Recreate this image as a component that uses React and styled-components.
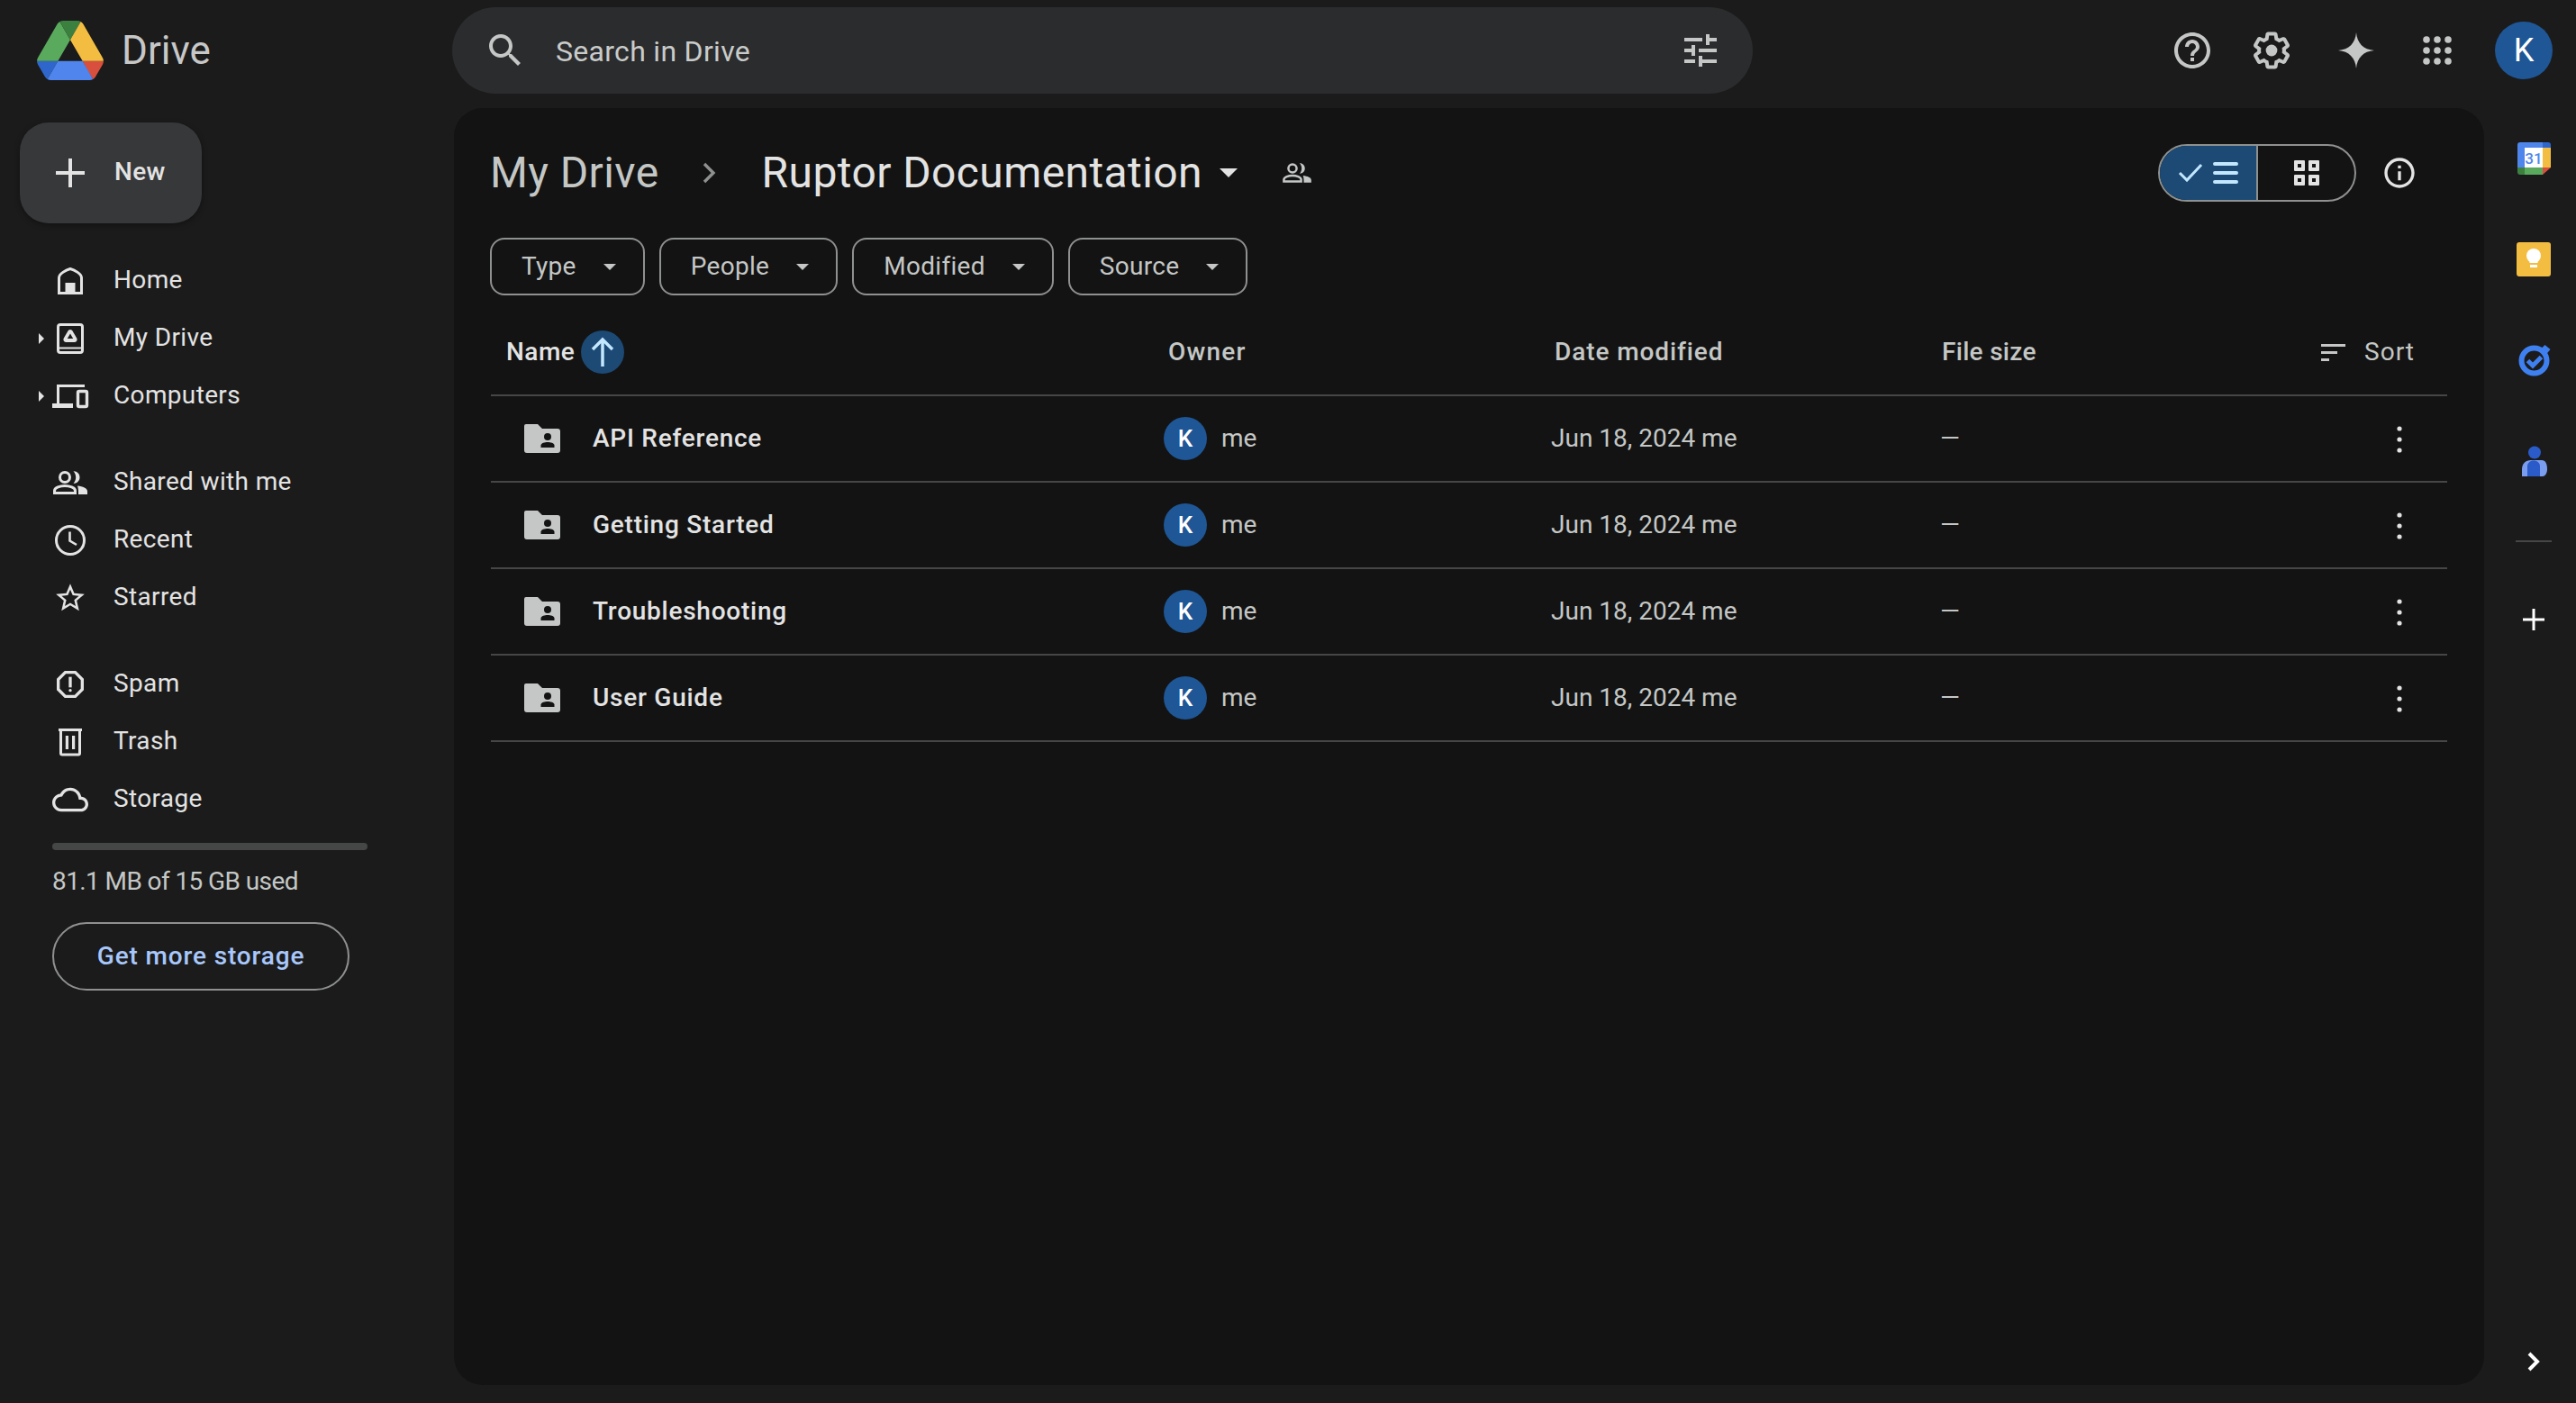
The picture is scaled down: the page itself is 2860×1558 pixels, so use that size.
import React from "react";
import styled, { createGlobalStyle } from "styled-components";

const Global = createGlobalStyle`
  html, body { margin: 0; padding: 0; background: #1b1b1b; }
  body { font-family: Roboto, "Noto Sans", "Liberation Sans", sans-serif; color: #e3e3e3; overflow: hidden; }
  * { box-sizing: border-box; }
`;

const Page = styled.div`
  width: 2860px;
  height: 1558px;
  display: grid;
  grid-template-columns: 504px 1fr 102px;
  grid-template-rows: 120px 1fr;
  background: #1b1b1b;
`;

/* ---------- header ---------- */
const Header = styled.header`
  grid-column: 1 / -1;
  display: flex;
  align-items: flex-start;
`;
const Brand = styled.div`
  width: 502px;
  height: 112px;
  display: flex;
  align-items: center;
  padding-left: 41px;
  gap: 20px;
`;
const BrandName = styled.span`
  font-size: 44px;
  color: #c7c7c7;
`;
const SearchBar = styled.div`
  width: 1444px;
  height: 96px;
  margin-top: 8px;
  border-radius: 48px;
  background: #2b2c2e;
  display: flex;
  align-items: center;
  padding: 0 34px 0 35px;
  color: #c4c7c5;
`;
const SearchLabel = styled.span`
  flex: 1;
  font-size: 32px;
  margin: 1px 0 0 32px;
  color: #c9cbc9;
  letter-spacing: 0.3px;
`;
const HeaderTools = styled.div`
  flex: 1;
  display: flex;
  align-items: center;
  justify-content: flex-end;
  gap: 40px;
  height: 64px;
  margin-top: 24px;
  padding-right: 26px;
  color: #c4c7c5;
`;
const SparkSlot = styled.span`
  display: flex;
  margin: 0 2px 0 6px;
`;
const Avatar = styled.div`
  width: ${(p) => p.$size}px;
  height: ${(p) => p.$size}px;
  flex: none;
  border-radius: 50%;
  background: #1f5695;
  color: #fff;
  display: flex;
  align-items: center;
  justify-content: center;
  font-size: ${(p) => p.$font}px;
  font-weight: ${(p) => p.$weight};
`;

/* ---------- sidebar ---------- */
const Sidebar = styled.aside`
  display: flex;
  flex-direction: column;
  padding-top: 16px;
`;
const NewButton = styled.div`
  width: 202px;
  height: 112px;
  margin-left: 22px;
  border-radius: 32px;
  background: #37383a;
  box-shadow: 0 2px 6px rgba(0, 0, 0, 0.35);
  display: flex;
  align-items: center;
  padding-left: 32px;
  gap: 25px;
  font-size: 28px;
  font-weight: 460;
  color: #e3e3e3;
`;
const NewLabel = styled.span`
  margin-top: -3px;
  letter-spacing: 0.3px;
`;
const NavGroup = styled.nav`
  margin-top: 32px;
  display: flex;
  flex-direction: column;
`;
const NavRow = styled.div`
  height: 64px;
  display: grid;
  grid-template-columns: 14px 48px 1fr;
  align-items: center;
  padding-left: 40px;
  font-size: 28px;
  color: #e3e3e3;
`;
const Expander = styled.span`
  width: 0;
  height: 0;
  margin-left: 3px;
  border-left: 6px solid #e3e3e3;
  border-top: 6px solid transparent;
  border-bottom: 6px solid transparent;
`;
const NavIconBox = styled.span`
  width: 48px;
  height: 48px;
  display: flex;
  align-items: center;
  justify-content: center;
`;
const NavLabel = styled.span`
  margin: -3px 0 0 24px;
  letter-spacing: 0.35px;
`;
const StorageBar = styled.div`
  width: 350px;
  height: 8px;
  margin: 16px 0 0 58px;
  border-radius: 4px;
  background: #444746;
`;
const StorageText = styled.div`
  margin: 17px 0 0 58px;
  font-size: 28px;
  line-height: 36px;
  color: #c4c7c5;
  letter-spacing: -0.6px;
`;
const StorageButton = styled.div`
  width: 330px;
  height: 76px;
  margin: 27px 0 0 58px;
  padding-bottom: 2px;
  border: 2px solid #8e918f;
  border-radius: 38px;
  display: flex;
  align-items: center;
  justify-content: center;
  font-size: 28px;
  font-weight: 460;
  letter-spacing: 0.85px;
  color: #a8c7fa;
`;

/* ---------- main ---------- */
const Main = styled.main`
  margin-bottom: 20px;
  border-radius: 32px;
  background: #131313;
  padding: 40px 41px 0 41px;
`;
const TitleRow = styled.div`
  height: 64px;
  margin-left: -1px;
  display: flex;
  align-items: center;
`;
const Crumb = styled.span`
  font-size: 48px;
  margin-top: -2px;
  color: #c4c7c5;
  letter-spacing: 0.4px;
`;
const CrumbSep = styled.span`
  display: flex;
  margin: 0 49px 0 47px;
`;
const CurrentCrumb = styled(Crumb)`
  color: #e3e3e3;
`;
const TitleCaret = styled.span`
  width: 0;
  height: 0;
  margin-left: 19px;
  border-top: 10px solid #e3e3e3;
  border-left: 10px solid transparent;
  border-right: 10px solid transparent;
`;
const SharedIcon = styled.span`
  display: flex;
  margin-left: 46px;
  color: #c4c7c5;
`;
const TitleTools = styled.div`
  margin-left: auto;
  display: flex;
  align-items: center;
  gap: 28px;
  padding-right: 33px;
`;
const ViewToggle = styled.div`
  width: 220px;
  height: 64px;
  display: flex;
  border: 2px solid #8e918f;
  border-radius: 32px;
  overflow: hidden;
`;
const ViewSegment = styled.div`
  flex: ${(p) => (p.$active ? "0 0 109px" : "1")};
  display: flex;
  align-items: center;
  justify-content: center;
  gap: 11px;
  background: ${(p) => (p.$active ? "#1c4a75" : "transparent")};
  color: ${(p) => (p.$active ? "#c2e7ff" : "#e3e3e3")};
  border-right: ${(p) => (p.$active ? "2px solid #8e918f" : "none")};
`;
const Filters = styled.div`
  margin: 40px 0 0 -1px;
  display: flex;
  gap: 16px;
`;
const Chip = styled.div`
  height: 64px;
  padding: 0 30px 0 33px;
  display: flex;
  align-items: center;
  gap: 30px;
  border: 2px solid #8e918f;
  border-radius: 16px;
  font-size: 28px;
  letter-spacing: 0.3px;
  color: #c4c7c5;
`;
const ChipLabel = styled.span`
  margin-top: -2px;
`;
const ChipCaret = styled.span`
  width: 0;
  height: 0;
  border-top: 7px solid #c4c7c5;
  border-left: 7px solid transparent;
  border-right: 7px solid transparent;
`;
const Table = styled.div`
  margin-top: 16px;
`;
const TableRow = styled.div`
  height: 96px;
  display: grid;
  grid-template-columns: 747px 430px 428px 1fr auto;
  align-items: center;
  border-bottom: 2px solid #444746;
  font-size: 28px;
  color: #c4c7c5;
`;
const CellText = styled.span`
  margin-top: -2px;
`;
const HeadCell = styled.div`
  display: flex;
  align-items: center;
  padding-left: ${(p) => p.$pad}px;
  font-weight: 460;
  letter-spacing: ${(p) => p.$track}px;
  color: ${(p) => (p.$strong ? "#e3e3e3" : "#c4c7c5")};
`;
const SortBadge = styled.span`
  width: 48px;
  height: 48px;
  margin-left: 7px;
  border-radius: 50%;
  background: #1c4a75;
  color: #c2e7ff;
  display: flex;
  align-items: center;
  justify-content: center;
`;
const SortControl = styled.div`
  display: flex;
  align-items: center;
  gap: 20px;
  padding-right: 36px;
  letter-spacing: 1px;
  color: #c4c7c5;
`;
const NameCell = styled.div`
  display: flex;
  align-items: center;
  gap: 36px;
  padding-left: 37px;
  color: #e3e3e3;
  font-weight: 460;
  letter-spacing: 0.75px;
`;
const OwnerCell = styled.div`
  display: flex;
  align-items: center;
  gap: 16px;
`;
const DateCell = styled.div`
  display: flex;
`;
const SizeCell = styled.div`
  display: flex;
  padding-left: 4px;
`;
const RowAction = styled.div`
  display: flex;
  padding-right: 29px;
  color: #e3e3e3;
`;

/* ---------- right rail ---------- */
const Rail = styled.aside`
  display: flex;
  flex-direction: column;
  align-items: center;
  padding: 32px 0 22px 8px;
  gap: 64px;
  color: #fff;
`;
const RailDivider = styled.div`
  width: 40px;
  height: 2px;
  margin-bottom: -2px;
  background: #444746;
`;
const RailPlus = styled.div`
  display: flex;
  color: #fff;
  padding: 6px;
`;
const RailBottom = styled.div`
  margin-top: auto;
  display: flex;
`;

/* ---------- icons ---------- */
const Mat = ({ size = 48, d, children, ...r }) => (
  <svg width={size} height={size} viewBox="0 0 24 24" fill="currentColor" {...r}>
    {d && <path d={d} />}
    {children}
  </svg>
);
const Box = ({ children, size = 48 }) => (
  <svg width={size} height={size} viewBox="0 0 48 48" fill="none">
    {children}
  </svg>
);

const DriveLogo = () => (
  <svg width="74" height="66" viewBox="0 0 87.3 78">
    <path d="m6.6 66.85 3.85 6.65c.8 1.4 1.95 2.5 3.3 3.3l13.75-23.8h-27.5c0 1.55.4 3.1 1.2 4.5z" fill="#2e66cc" />
    <path d="m43.65 25-13.75-23.8c-1.35.8-2.5 1.9-3.3 3.3l-25.4 44a9.06 9.06 0 0 0 -1.2 4.5h27.5z" fill="#5aaa5e" />
    <path d="m73.55 76.8c1.35-.8 2.5-1.9 3.3-3.3l1.6-2.75 7.65-13.25c.8-1.4 1.2-2.95 1.2-4.5h-27.502l5.852 11.5z" fill="#d94f3d" />
    <path d="m43.65 25 13.75-23.8c-1.35-.8-2.9-1.2-4.5-1.2h-18.5c-1.6 0-3.15.45-4.5 1.2z" fill="#3b803f" />
    <path d="m59.8 53h-32.3l-13.75 23.8c1.35.8 2.9 1.2 4.5 1.2h50.8c1.6 0 3.15-.45 4.5-1.2z" fill="#4f85ec" />
    <path d="m73.4 26.5-12.7-22c-.8-1.4-1.95-2.5-3.3-3.3l-13.75 23.8 16.15 28h27.45c0-1.55-.4-3.1-1.2-4.5z" fill="#f3bd41" />
  </svg>
);

const SearchIcon = () => (
  <Mat d="M15.5 14h-.79l-.28-.27C15.41 12.59 16 11.11 16 9.5 16 5.91 13.09 3 9.5 3S3 5.91 3 9.5 5.91 16 9.5 16c1.61 0 3.09-.59 4.23-1.57l.27.28v.79l5 4.99L20.49 19l-4.99-5zm-6 0C7.01 14 5 11.99 5 9.5S7.01 5 9.5 5 14 7.01 14 9.5 11.99 14 9.5 14z" />
);
const TuneIcon = () => (
  <Mat d="M3 17v2h6v-2H3zM3 5v2h10V5H3zm10 16v-2h8v-2h-8v-2h-2v6h2zM7 9v2H3v2h4v2h2V9H7zm14 4v-2H11v2h10zm-6-4h2V7h4V5h-4V3h-2v6z" />
);
const HelpIcon = () => (
  <Mat d="M11 18h2v-2h-2v2zm1-16C6.48 2 2 6.48 2 12s4.48 10 10 10 10-4.48 10-10S17.52 2 12 2zm0 18c-4.41 0-8-3.59-8-8s3.59-8 8-8 8 3.59 8 8-3.59 8-8 8zm0-14c-2.21 0-4 1.79-4 4h2c0-1.1.9-2 2-2s2 .9 2 2c0 2-3 1.75-3 5h2c0-2.25 3-2.5 3-5 0-2.21-1.79-4-4-4z" />
);
const GearIcon = () => (
  <Mat>
    <path d="M13.85 22.25h-3.7c-.74 0-1.36-.54-1.45-1.27l-.27-1.89c-.27-.14-.53-.29-.79-.46l-1.8.72c-.7.26-1.47-.03-1.81-.65L2.2 15.53c-.35-.66-.2-1.44.36-1.88l1.53-1.19c-.01-.15-.02-.3-.02-.46 0-.15.01-.31.02-.46l-1.52-1.19c-.59-.45-.74-1.26-.37-1.88l1.85-3.19c.34-.62 1.11-.9 1.79-.63l1.81.73c.26-.17.52-.32.78-.46l.27-1.91c.09-.7.71-1.25 1.44-1.25h3.7c.74 0 1.36.54 1.45 1.27l.27 1.89c.27.14.53.29.79.46l1.8-.72c.71-.26 1.48.03 1.82.65l1.84 3.18c.36.66.2 1.44-.36 1.88l-1.52 1.19c.01.15.02.3.02.46s-.01.31-.02.46l1.52 1.19c.56.45.72 1.23.37 1.86l-1.86 3.22c-.34.62-1.11.9-1.8.63l-1.8-.72c-.26.17-.52.32-.78.46l-.27 1.91c-.1.68-.72 1.22-1.45 1.22zm-3.23-2h2.76l.37-2.55.53-.22c.44-.18.88-.44 1.34-.78l.45-.34 2.38.96 1.38-2.4-2.03-1.58.07-.56c.03-.26.06-.51.06-.78s-.03-.53-.06-.78l-.07-.56 2.03-1.58-1.39-2.4-2.39.96-.45-.35c-.42-.32-.87-.58-1.33-.77l-.52-.22-.37-2.55h-2.76l-.37 2.55-.53.21c-.44.19-.88.44-1.34.79l-.45.33-2.38-.95-1.39 2.39 2.03 1.58-.07.56a7 7 0 0 0-.06.79c0 .26.02.53.06.78l.07.56-2.03 1.58 1.38 2.4 2.39-.96.45.35c.43.33.86.58 1.33.77l.53.22.38 2.55z" />
    <circle cx="12" cy="12" r="3.2" />
  </Mat>
);
const SparkIcon = () => (
  <Box>
    <path d="M24 4C25 16 32 23 44 24C32 25 25 32 24 44C23 32 16 25 4 24C16 23 23 16 24 4Z" fill="#c4c7c5" />
  </Box>
);
const AppsIcon = () => (
  <Box>
    {[12, 24, 36].flatMap((y) =>
      [12, 24, 36].map((x) => <circle key={`${x}-${y}`} cx={x} cy={y} r="3.8" fill="#c4c7c5" />)
    )}
  </Box>
);
const PlusIcon = ({ size = 48 }) => (
  <Box size={size}>
    <path d="M24 8V40M8 24H40" stroke="currentColor" strokeWidth="4" />
  </Box>
);
const HomeIcon = () => (
  <Box>
    <path d="M11.5 37.5V20.5C11.5 16 19 12 24 10.5C29 12 36.5 16 36.5 20.5V37.5Z" stroke="#e3e3e3" strokeWidth="3" />
    <rect x="18.5" y="26" width="11" height="12" fill="#e3e3e3" />
  </Box>
);
const MyDriveIcon = () => (
  <Box>
    <rect x="10.5" y="8.5" width="27" height="31" rx="2.5" stroke="#e3e3e3" strokeWidth="3" />
    <path d="M10 34.5H38" stroke="#e3e3e3" strokeWidth="2" />
    <path d="M24 14C25.4 14 26 14.8 26.5 15.6L31.2 23.6C32.2 25.6 31 28 29 28H19C17 28 15.8 25.6 16.8 23.6L21.5 15.6C22 14.8 22.6 14 24 14Z" fill="#e3e3e3" />
    <path d="M24 18.5L27.2 24H20.8Z" fill="#1b1b1b" />
  </Box>
);
const ComputersIcon = () => (
  <Box>
    <path d="M40 12.5H10.5V34" stroke="#e3e3e3" strokeWidth="3" />
    <rect x="4" y="32" width="23" height="5" fill="#e3e3e3" />
    <rect x="32.5" y="18.5" width="10" height="17" rx="1.5" stroke="#e3e3e3" strokeWidth="3.4" />
  </Box>
);
const PeopleIcon = ({ size = 48, color = "#e3e3e3" }) => (
  <Box size={size}>
    <circle cx="18" cy="18" r="5.5" stroke={color} strokeWidth="3" />
    <path d="M6.5 35.5V33C6.5 29.5 13 27.5 18 27.5C23 27.5 29.5 29.5 29.5 33V35.5Z" stroke={color} strokeWidth="3" />
    <path d="M27.5 11.2C31.5 11 34.5 14 34.5 18C34.5 22 31.5 25 27.5 24.8C29.3 22.8 30.2 20.6 30.2 18C30.2 15.4 29.3 13.2 27.5 11.2Z" fill={color} />
    <path d="M32 27.6C38 28.5 43 30 43 33.5V37H33V33C33 31 32.5 29.2 32 27.6Z" fill={color} />
  </Box>
);
const ClockIcon = () => (
  <Box>
    <circle cx="24" cy="24" r="15.5" stroke="#e3e3e3" strokeWidth="3" />
    <path d="M23.5 14.5V24.5L31 29" stroke="#e3e3e3" strokeWidth="2.6" />
  </Box>
);
const StarIcon = () => (
  <Mat size={38} d="M22 9.24l-7.19-.62L12 2 9.19 8.63 2 9.24l5.46 4.73L5.82 21 12 17.27 18.18 21l-1.63-7.03L22 9.24zM12 15.4l-3.76 2.27 1-4.28-3.32-2.88 4.38-.38L12 6.1l1.71 4.04 4.38.38-3.32 2.88 1 4.28L12 15.4z" />
);
const SpamIcon = () => (
  <Mat size={40}>
    <path d="M15.73 3H8.27L3 8.27v7.46L8.27 21h7.46L21 15.73V8.27L15.73 3zM19 14.9L14.9 19H9.1L5 14.9V9.1L9.1 5h5.8L19 9.1v5.8z" />
    <circle cx="12" cy="16" r="1" />
    <path d="M11 7h2v7h-2z" />
  </Mat>
);
const TrashIcon = () => (
  <Box>
    <path d="M11 10.5H37" stroke="#e3e3e3" strokeWidth="3" />
    <rect x="13.5" y="10.5" width="21" height="27.5" rx="1.5" stroke="#e3e3e3" strokeWidth="3" />
    <rect x="18.8" y="17" width="3.2" height="15" fill="#e3e3e3" />
    <rect x="26" y="17" width="3.2" height="15" fill="#e3e3e3" />
  </Box>
);
const CloudIcon = () => (
  <Mat size={40} d="M19.35 10.04C18.67 6.59 15.64 4 12 4 9.11 4 6.6 5.64 5.35 8.04 2.34 8.36 0 10.91 0 14c0 3.31 2.69 6 6 6h13c2.76 0 5-2.24 5-5 0-2.64-2.05-4.78-4.65-4.96zM19 18H6c-2.21 0-4-1.79-4-4 0-2.05 1.53-3.76 3.56-3.97l1.07-.11.5-.95C8.08 7.14 9.94 6 12 6c2.62 0 4.88 1.86 5.39 4.43l.3 1.5 1.53.11c1.56.1 2.78 1.41 2.78 2.96 0 1.65-1.35 3-3 3z" />
);
const ChevronSep = () => (
  <svg width="18" height="26" viewBox="0 0 18 26" fill="none">
    <path d="M3 3L13 13L3 23" stroke="#8e918f" strokeWidth="3.4" />
  </svg>
);
const CheckIcon = () => (
  <svg width="28" height="22" viewBox="0 0 28 22" fill="none">
    <path d="M2 11L10 19L26 2" stroke="#c2e7ff" strokeWidth="3" />
  </svg>
);
const ListIcon = () => (
  <svg width="28" height="26" viewBox="0 0 28 26" fill="none">
    <path d="M2 3H26M2 13H26M2 23H26" stroke="#c2e7ff" strokeWidth="4" strokeLinecap="round" />
  </svg>
);
const GridIcon = () => (
  <svg width="28" height="28" viewBox="0 0 28 28">
    {[0, 16].flatMap((y) =>
      [0, 16].map((x) => (
        <path
          key={`${x}-${y}`}
          fillRule="evenodd"
          d={`M${x + 1} ${y}h10a1 1 0 0 1 1 1v10a1 1 0 0 1 -1 1h-10a1 1 0 0 1 -1 -1v-10a1 1 0 0 1 1 -1zM${x + 4} ${y + 4}v4h4v-4z`}
          fill="#e3e3e3"
        />
      ))
    )}
  </svg>
);
const InfoIcon = () => (
  <Mat size={40} d="M11 7h2v2h-2zm0 4h2v6h-2zm1-9C6.48 2 2 6.48 2 12s4.48 10 10 10 10-4.48 10-10S17.52 2 12 2zm0 18c-4.41 0-8-3.59-8-8s3.59-8 8-8 8 3.59 8 8-3.59 8-8 8z" />
);
const ArrowUpIcon = () => (
  <Box>
    <path d="M24 40V11M13 21L24 10L35 21" stroke="currentColor" strokeWidth="3.5" />
  </Box>
);
const SortIcon = () => (
  <svg width="28" height="20" viewBox="0 0 28 20">
    <rect x="0" y="1" width="27" height="3" fill="#c4c7c5" />
    <rect x="0" y="9" width="18" height="3" fill="#c4c7c5" />
    <rect x="0" y="17" width="9" height="3" fill="#c4c7c5" />
  </svg>
);
const KebabIcon = () => (
  <Box>
    <circle cx="24" cy="13" r="2.6" fill="#e3e3e3" />
    <circle cx="24" cy="25" r="2.6" fill="#e3e3e3" />
    <circle cx="24" cy="37" r="2.6" fill="#e3e3e3" />
  </Box>
);
const FolderIcon = () => (
  <svg width="40" height="32" viewBox="0 0 40 32">
    <path d="M2 0H15L20 5H37Q40 5 40 8V29Q40 32 37 32H3Q0 32 0 29V2Q0 0 2 0Z" fill="#c4c7c5" />
    <circle cx="26" cy="14" r="4" fill="#131313" />
    <path d="M18.5 26V23.5C18.5 21 23 20 26 20C29 20 33.5 21 33.5 23.5V26Z" fill="#131313" />
  </svg>
);
const CalendarIcon = () => (
  <Box>
    <path d="M9 6Q6 6 6 9V34H14V12H34V6Z" fill="#4f86ec" />
    <path d="M34 6H40Q43 6 43 9V12H34Z" fill="#2e66cc" />
    <path d="M34 12H43V34H34Z" fill="#f3bd41" />
    <path d="M6 34H14V42H9Q6 42 6 39Z" fill="#3b803f" />
    <path d="M14 34H34V42H14Z" fill="#5aaa5e" />
    <path d="M34 34H43L34 42Z" fill="#d94f3d" />
    <rect x="14" y="12" width="20" height="22" fill="#fff" />
    <text x="24" y="29.5" textAnchor="middle" fontFamily="Roboto, sans-serif" fontSize="17" fontWeight="500" fill="#4f86ec">31</text>
  </Box>
);
const KeepIcon = () => (
  <Box>
    <rect x="5" y="5" width="38" height="38" rx="3" fill="#f3bd41" />
    <circle cx="24" cy="20" r="8" fill="#fff" />
    <path d="M19.5 24H28.5V28H19.5Z" fill="#fff" />
    <rect x="20" y="30" width="8" height="3" fill="#fff" />
  </Box>
);
const TasksIcon = () => (
  <Box>
    <circle cx="24.5" cy="24.5" r="14" stroke="#3f80f0" strokeWidth="6" />
    <path d="M17.5 24.5L23 30L32.5 20.5" stroke="#3f80f0" strokeWidth="5" />
    <path d="M36.5 7L42.5 12L37.5 18L31.5 12Z" fill="#3f80f0" />
  </Box>
);
const ContactsIcon = () => (
  <Box>
    <circle cx="25" cy="14.5" r="7" fill="#2a5bc9" />
    <path d="M11 41V33C11 27 15 23 21 23H33C37 23 39 27 39 33C39 37 37 41 34 41Z" fill="#7a9df0" />
    <path d="M17 41V30C17 26 20 23.5 24 23.5C28 23.5 31 26 31 30V41Z" fill="#2a5bc9" />
  </Box>
);
const ChevronRight = () => (
  <svg width="48" height="48" viewBox="0 0 48 48" fill="none">
    <path d="M19 15L28 24L19 33" stroke="#fff" strokeWidth="4" />
  </svg>
);

const navGroups = [
  [
    { label: "Home", icon: <HomeIcon /> },
    { label: "My Drive", icon: <MyDriveIcon />, expand: true },
    { label: "Computers", icon: <ComputersIcon />, expand: true },
  ],
  [
    { label: "Shared with me", icon: <PeopleIcon /> },
    { label: "Recent", icon: <ClockIcon /> },
    { label: "Starred", icon: <StarIcon /> },
  ],
  [
    { label: "Spam", icon: <SpamIcon /> },
    { label: "Trash", icon: <TrashIcon /> },
    { label: "Storage", icon: <CloudIcon /> },
  ],
];

const folders = ["API Reference", "Getting Started", "Troubleshooting", "User Guide"];
const filters = ["Type", "People", "Modified", "Source"];

export default function App() {
  return (
    <Page>
      <Global />
      <Header>
        <Brand>
          <DriveLogo />
          <BrandName>Drive</BrandName>
        </Brand>
        <SearchBar>
          <SearchIcon />
          <SearchLabel>Search in Drive</SearchLabel>
          <TuneIcon />
        </SearchBar>
        <HeaderTools>
          <HelpIcon />
          <GearIcon />
          <SparkSlot>
            <SparkIcon />
          </SparkSlot>
          <AppsIcon />
          <Avatar $size={64} $font={36} $weight={400}>K</Avatar>
        </HeaderTools>
      </Header>

      <Sidebar>
        <NewButton>
          <PlusIcon />
          <NewLabel>New</NewLabel>
        </NewButton>
        {navGroups.map((group, i) => (
          <NavGroup key={i}>
            {group.map((item) => (
              <NavRow key={item.label}>
                {item.expand ? <Expander /> : <span />}
                <NavIconBox>{item.icon}</NavIconBox>
                <NavLabel>{item.label}</NavLabel>
              </NavRow>
            ))}
          </NavGroup>
        ))}
        <StorageBar />
        <StorageText>81.1 MB of 15 GB used</StorageText>
        <StorageButton>Get more storage</StorageButton>
      </Sidebar>

      <Main>
        <TitleRow>
          <Crumb>My Drive</Crumb>
          <CrumbSep>
            <ChevronSep />
          </CrumbSep>
          <CurrentCrumb>Ruptor Documentation</CurrentCrumb>
          <TitleCaret />
          <SharedIcon>
            <PeopleIcon size={40} color="#c4c7c5" />
          </SharedIcon>
          <TitleTools>
            <ViewToggle>
              <ViewSegment $active>
                <CheckIcon />
                <ListIcon />
              </ViewSegment>
              <ViewSegment>
                <GridIcon />
              </ViewSegment>
            </ViewToggle>
            <InfoIcon />
          </TitleTools>
        </TitleRow>
        <Filters>
          {filters.map((f) => (
            <Chip key={f}>
              <ChipLabel>{f}</ChipLabel>
              <ChipCaret />
            </Chip>
          ))}
        </Filters>
        <Table>
          <TableRow>
            <HeadCell $pad={17} $track={0.5} $strong>
              <CellText>Name</CellText>
              <SortBadge>
                <ArrowUpIcon />
              </SortBadge>
            </HeadCell>
            <HeadCell $pad={5} $track={1.2}><CellText>Owner</CellText></HeadCell>
            <HeadCell $pad={4} $track={0.9}><CellText>Date modified</CellText></HeadCell>
            <HeadCell $pad={6} $track={0.3}><CellText>File size</CellText></HeadCell>
            <SortControl>
              <SortIcon />
              <CellText>Sort</CellText>
            </SortControl>
          </TableRow>
          {folders.map((name) => (
            <TableRow key={name}>
              <NameCell>
                <FolderIcon />
                <CellText>{name}</CellText>
              </NameCell>
              <OwnerCell>
                <Avatar $size={48} $font={26} $weight={500}>K</Avatar>
                <CellText>me</CellText>
              </OwnerCell>
              <DateCell><CellText>Jun 18, 2024 me</CellText></DateCell>
              <SizeCell><CellText>—</CellText></SizeCell>
              <RowAction>
                <KebabIcon />
              </RowAction>
            </TableRow>
          ))}
        </Table>
      </Main>

      <Rail>
        <CalendarIcon />
        <KeepIcon />
        <TasksIcon />
        <ContactsIcon />
        <RailDivider />
        <RailPlus>
          <PlusIcon size={36} />
        </RailPlus>
        <RailBottom>
          <ChevronRight />
        </RailBottom>
      </Rail>
    </Page>
  );
}
